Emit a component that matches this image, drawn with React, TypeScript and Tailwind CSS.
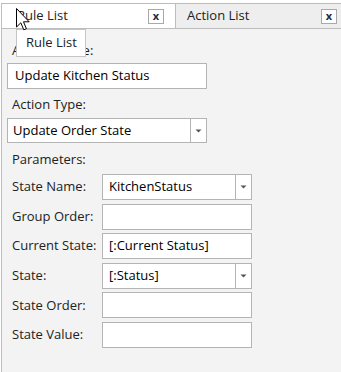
import { ReactNode } from 'react';

const font = { fontFamily: '"Open Sans", "Noto Sans", sans-serif' };

function CloseBox() {
  return (
    <div className="w-[16px] h-[15px] border border-[#a9a9a9] bg-white flex items-center justify-center text-[11px] font-bold leading-none text-[#1f2a44] pb-[2px]">
      x
    </div>
  );
}

function Arrow() {
  return (
    <svg width="7" height="4" viewBox="0 0 7 4">
      <path d="M0.5 0.5 H6.5 L3.5 3.5 Z" fill="#555" />
    </svg>
  );
}

function TextBox({ value, className = '' }: { value?: string; className?: string }) {
  return (
    <div className={`h-full border border-[#b4b4b4] bg-white flex items-center text-[13px] text-black ${className}`}>
      {value}
    </div>
  );
}

function Combo({ value, pad = 'pl-[6px]' }: { value: string; pad?: string }) {
  return (
    <div className="h-full border border-[#b4b4b4] bg-white flex">
      <div className={`flex-1 flex items-center text-[13px] text-black ${pad}`}>{value}</div>
      <div className="w-[16px] border-l border-[#b4b4b4] flex items-center justify-center">
        <Arrow />
      </div>
    </div>
  );
}

function Row({ label, children }: { label: string; children: ReactNode }) {
  return (
    <div className="flex items-center h-[26px]">
      <div className="w-[90px] text-[13px] text-[#222]">{label}</div>
      <div className="w-[150px] h-full">{children}</div>
    </div>
  );
}

export default function App() {
  const params = [
    { label: 'State Name:', combo: true, value: 'KitchenStatus' },
    { label: 'Group Order:', combo: false, value: '' },
    { label: 'Current State:', combo: false, value: '[:Current Status]' },
    { label: 'State:', combo: true, value: '[:Status]' },
    { label: 'State Order:', combo: false, value: '' },
    { label: 'State Value:', combo: false, value: '' },
  ];

  return (
    <div className="relative w-[341px] h-[372px] bg-white pt-[3px] pl-[1px] flex flex-col overflow-hidden" style={font}>
      {/* tabs */}
      <div className="flex h-[26px] border-b border-[#bdbdbd]">
        <div className="w-[175px] bg-white border-t border-l border-r border-[#bdbdbd] flex items-center pl-[15px] pr-[11px] text-[13px] text-[#222]">
          <span className="flex-1">Rule List</span>
          <CloseBox />
        </div>
        <div className="flex-1 bg-[#eeeeee] border-t border-[#bdbdbd] flex items-center pl-[11px] pr-[4px] text-[13px] text-[#222]">
          <span className="flex-1">Action List</span>
          <CloseBox />
        </div>
      </div>

      {/* panel */}
      <div className="flex-1 bg-[#f3f3f3] border-l border-[#bdbdbd] pl-[5px] flex flex-col">
        <div className="mt-[13px] pl-[5px] h-[17px] text-[13px] text-[#222] leading-[17px]">Action Name:</div>
        <div className="mt-[4px] w-[200px] h-[26px]">
          <TextBox value="Update Kitchen Status" className="pl-[7px]" />
        </div>
        <div className="mt-[7px] pl-[5px] h-[17px] text-[13px] text-[#222] leading-[17px]">Action Type:</div>
        <div className="mt-[5px] w-[200px] h-[25px]">
          <Combo value="Update Order State" pad="pl-[5px]" />
        </div>
        <div className="mt-[8px] pl-[5px] h-[17px] text-[13px] text-[#222] leading-[17px]">Parameters:</div>
        <div className="mt-[6px] pl-[5px] flex flex-col gap-y-[3.6px]">
          {params.map((p) => (
            <Row key={p.label} label={p.label}>
              {p.combo ? <Combo value={p.value} /> : <TextBox value={p.value} className="pl-[6px]" />}
            </Row>
          ))}
        </div>
      </div>

      {/* tooltip */}
      <div className="absolute left-[16px] top-[29px] w-[70px] h-[28px] bg-white border border-[#c4c4c4] flex items-center pl-[9px] text-[13px] text-[#222]">
        Rule List
      </div>

      {/* mouse cursor */}
      <svg className="absolute left-[16px] top-[8px]" width="14" height="24" viewBox="0 0 14 24">
        <path
          d="M0.5 0.5 V19 L4.8 14.8 L7.8 21.8 L10.4 20.7 L7.5 13.8 L13.2 13.8 Z"
          fill="#fff"
          stroke="#000"
          strokeWidth="1"
          strokeLinejoin="miter"
        />
      </svg>
    </div>
  );
}
